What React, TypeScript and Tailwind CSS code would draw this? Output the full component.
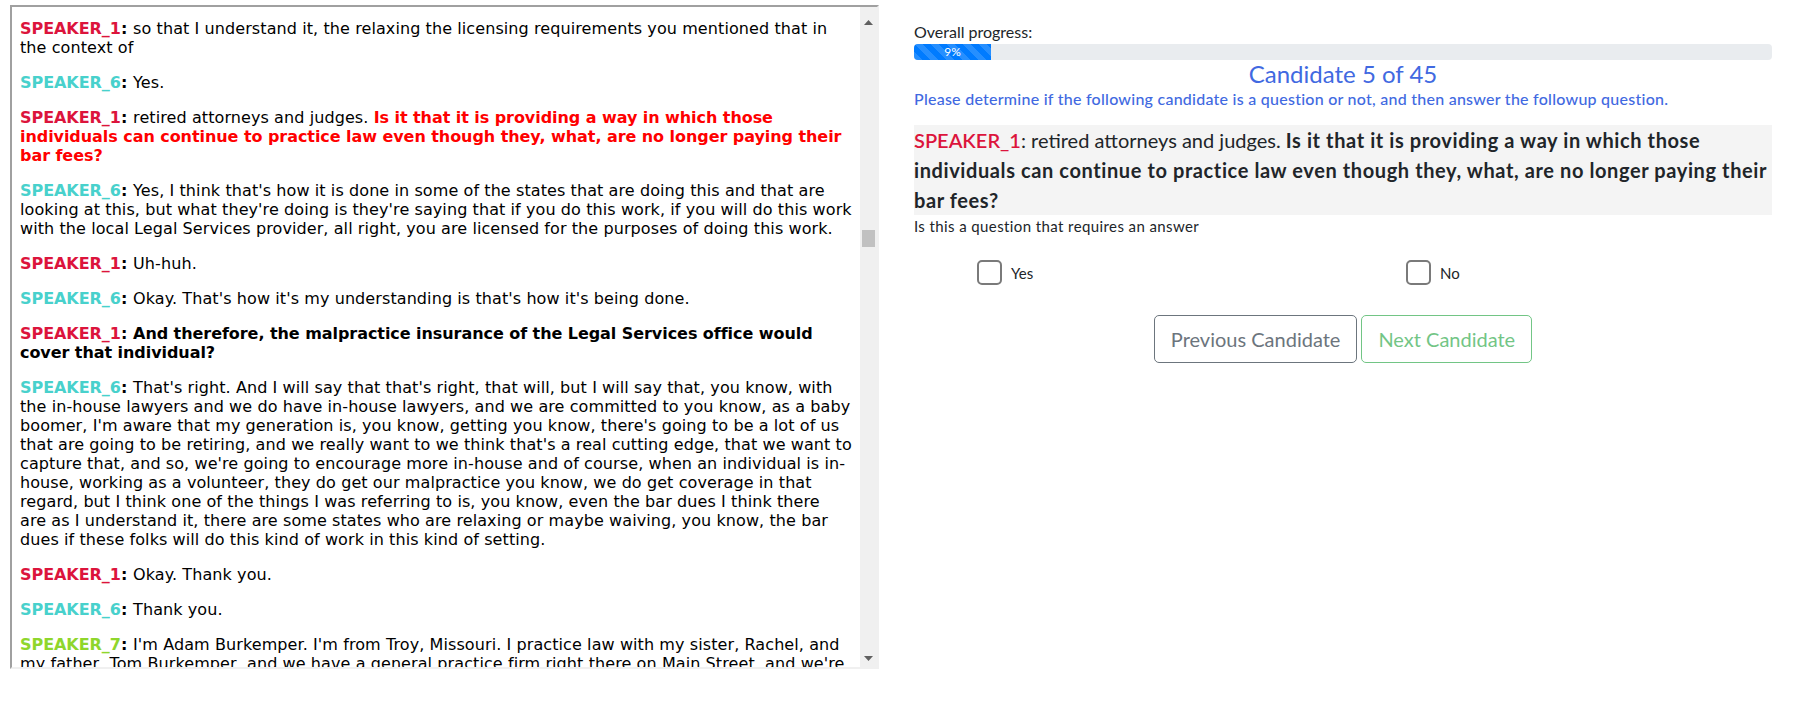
import React from 'react';

const SPEAKER_COLORS: Record<string, string> = {
  SPEAKER_1: 'text-[#dc143c]',
  SPEAKER_6: 'text-[#48d1cc]',
  SPEAKER_7: 'text-[#8fd62c]',
};

const Turn = ({ speaker, children }: { speaker: string; children: React.ReactNode }) => (
  <p className="mb-[16px]">
    <b className={`${SPEAKER_COLORS[speaker]} tracking-[-0.05px]`}>{speaker}</b>
    <b>: </b>
    {children}
  </p>
);

const FakeScrollbar = () => (
  <div className="w-[17px] shrink-0 bg-[#f0f0f0] flex flex-col items-center">
    <svg width="9" height="5" viewBox="0 0 9 5" className="mt-[13px]">
      <path d="M0 5 L4.5 0 L9 5 Z" fill="#606060" />
    </svg>
    <div className="mt-[205px] w-[13px] h-[17px] bg-[#c1c1c1]" />
    <div className="flex-1" />
    <svg width="9" height="5" viewBox="0 0 9 5" className="mb-[6px]">
      <path d="M0 0 L9 0 L4.5 5 Z" fill="#606060" />
    </svg>
  </div>
);

const Transcript = () => (
  <div className="mt-[5px] ml-[10px] w-[869px] h-[664px] shrink-0 flex border-2 border-t-[#a0a0a0] border-l-[#a0a0a0] border-r-[#f0f0f0] border-b-[#f0f0f0]">
    <div className="flex-1 overflow-hidden pl-[8px] pt-[12px] whitespace-nowrap font-['DejaVu_Sans',Verdana,sans-serif] text-[16px] leading-[19px] tracking-[0.09px] text-black">
      <Turn speaker="SPEAKER_1">
        so that I understand it, the relaxing the licensing requirements you mentioned that in
        <br />the context of
      </Turn>
      <Turn speaker="SPEAKER_6">Yes.</Turn>
      <Turn speaker="SPEAKER_1">
        retired attorneys and judges.{' '}
        <b className="text-[#ff0000] tracking-[-0.06px]">
          Is it that it is providing a way in which those
          <br />individuals can continue to practice law even though they, what, are no longer paying their
          <br />bar fees?
        </b>
      </Turn>
      <Turn speaker="SPEAKER_6">
        Yes, I think that's how it is done in some of the states that are doing this and that are
        <br />looking at this, but what they're doing is they're saying that if you do this work, if you will do this work
        <br />with the local Legal Services provider, all right, you are licensed for the purposes of doing this work.
      </Turn>
      <Turn speaker="SPEAKER_1">Uh-huh.</Turn>
      <Turn speaker="SPEAKER_6">Okay. That's how it's my understanding is that's how it's being done.</Turn>
      <Turn speaker="SPEAKER_1">
        <b className="tracking-[-0.06px]">
          And therefore, the malpractice insurance of the Legal Services office would
          <br />cover that individual?
        </b>
      </Turn>
      <Turn speaker="SPEAKER_6">
        That's right. And I will say that that's right, that will, but I will say that, you know, with
        <br />the in-house lawyers and we do have in-house lawyers, and we are committed to you know, as a baby
        <br />boomer, I'm aware that my generation is, you know, getting you know, there's going to be a lot of us
        <br />that are going to be retiring, and we really want to we think that's a real cutting edge, that we want to
        <br />capture that, and so, we're going to encourage more in-house and of course, when an individual is in-
        <br />house, working as a volunteer, they do get our malpractice you know, we do get coverage in that
        <br />regard, but I think one of the things I was referring to is, you know, even the bar dues I think there
        <br />are as I understand it, there are some states who are relaxing or maybe waiving, you know, the bar
        <br />dues if these folks will do this kind of work in this kind of setting.
      </Turn>
      <Turn speaker="SPEAKER_1">Okay. Thank you.</Turn>
      <Turn speaker="SPEAKER_6">Thank you.</Turn>
      <Turn speaker="SPEAKER_7">
        I'm Adam Burkemper. I'm from Troy, Missouri. I practice law with my sister, Rachel, and
        <br />my father, Tom Burkemper, and we have a general practice firm right there on Main Street, and we're
      </Turn>
    </div>
    <FakeScrollbar />
  </div>
);

const Choice = ({ label }: { label: string }) => (
  <label className="flex items-center gap-[9px] pl-[63px]">
    <span className="w-[25px] h-[25px] rounded-[5px] border-2 border-[#7a7a7a] bg-white" />
    <span className="text-[15px] leading-[20px]">{label}</span>
  </label>
);

const Candidate = () => {
  const current = 5;
  const total = 45;
  const pct = 9;
  return (
    <section className="ml-[35px] w-[858px] shrink-0 font-['Lato',sans-serif] text-[#212529]">
      <div className="pt-[20px] text-[16px] leading-[24px]">Overall progress:</div>
      <div className="h-[16px] rounded-[4px] bg-[#e9ecef] overflow-hidden flex">
        <div
          className="bg-[#007bff] bg-[linear-gradient(45deg,rgba(255,255,255,.15)_25%,transparent_25%,transparent_50%,rgba(255,255,255,.15)_50%,rgba(255,255,255,.15)_75%,transparent_75%,transparent)] bg-[length:16px_16px] text-white text-[12px] leading-[16px] text-center"
          style={{ width: `${pct}%` }}
        >
          {pct}%
        </div>
      </div>
      <h4 className="text-center text-[24px] leading-[28px] text-[#4169e1]">
        Candidate {current} of {total}
      </h4>
      <h6 className="text-[16px] leading-[22px] font-medium tracking-[0.25px] text-[#4169e1]">
        Please determine if the following candidate is a question or not, and then answer the followup question.
      </h6>
      <div className="mt-[15px] bg-[#f4f4f4] text-[20px] leading-[30px] whitespace-nowrap">
        <span className="font-semibold text-[#dc143c]">SPEAKER_1</span>: retired attorneys and judges.{' '}
        <b className="tracking-[0.6px]">
          Is it that it is providing a way in which those
          <br />individuals can continue to practice law even though they, what, are no longer paying their
          <br />bar fees?
        </b>
      </div>
      <div className="mt-[1px] text-[15px] leading-[21px] tracking-[0.4px]">Is this a question that requires an answer</div>
      <div className="mt-[23px] grid grid-cols-2">
        <Choice label="Yes" />
        <Choice label="No" />
      </div>
      <div className="mt-[30px] flex justify-center gap-[4px]">
        <button className="px-[16px] py-[8px] text-[20px] leading-[30px] rounded-[5px] border border-[#6c757d] text-[#6c757d]">
          Previous Candidate
        </button>
        <button disabled className="px-[16px] py-[8px] text-[20px] leading-[30px] rounded-[5px] border border-[#28a745] text-[#28a745] opacity-65">
          Next Candidate
        </button>
      </div>
    </section>
  );
};

export default function App() {
  return (
    <div className="w-[1794px] h-[710px] bg-white flex items-start">
      <Transcript />
      <Candidate />
    </div>
  );
}
